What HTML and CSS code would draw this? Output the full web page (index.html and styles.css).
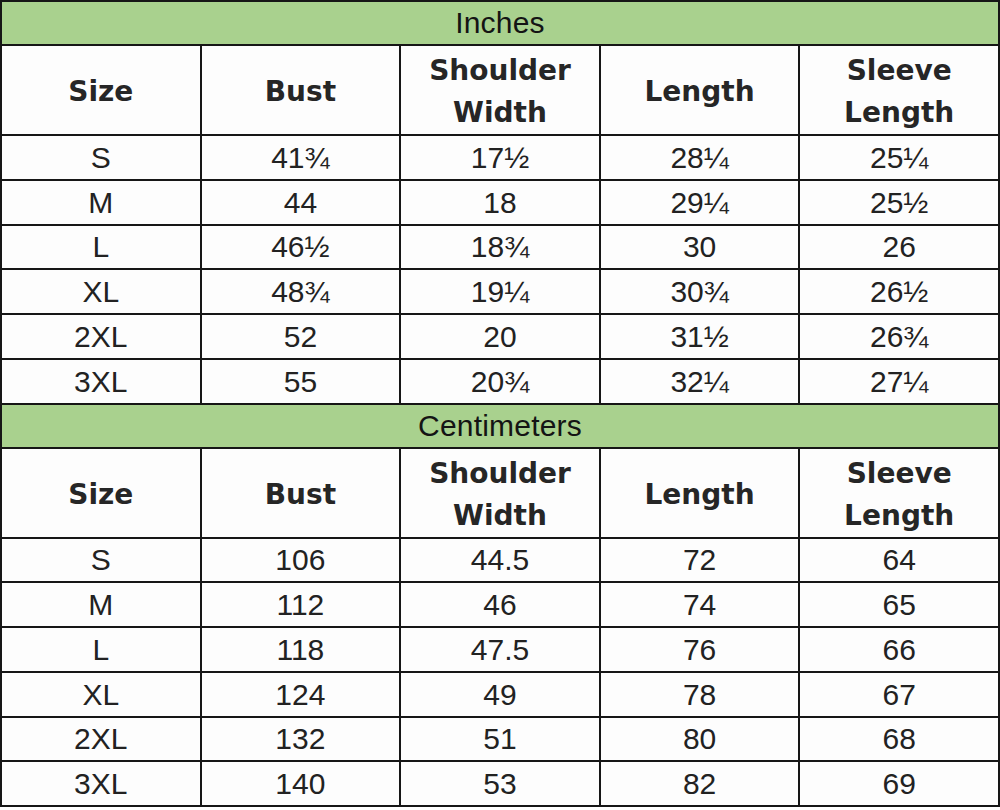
FILE: index.html
```html
<!DOCTYPE html>
<html>
<head>
<meta charset="utf-8">
<link rel="stylesheet" href="styles.css">
</head>
<body>
<table class="chart">
  <colgroup><col><col><col><col><col></colgroup>
  <tbody>
    <tr class="unit"><td colspan="5">Inches</td></tr>
    <tr class="head"><th>Size</th><th>Bust</th><th>Shoulder<br>Width</th><th>Length</th><th>Sleeve<br>Length</th></tr>
    <tr><td>S</td><td>41¾</td><td>17½</td><td>28¼</td><td>25¼</td></tr>
    <tr><td>M</td><td>44</td><td>18</td><td>29¼</td><td>25½</td></tr>
    <tr><td>L</td><td>46½</td><td>18¾</td><td>30</td><td>26</td></tr>
    <tr><td>XL</td><td>48¾</td><td>19¼</td><td>30¾</td><td>26½</td></tr>
    <tr><td>2XL</td><td>52</td><td>20</td><td>31½</td><td>26¾</td></tr>
    <tr><td>3XL</td><td>55</td><td>20¾</td><td>32¼</td><td>27¼</td></tr>
    <tr class="unit"><td colspan="5">Centimeters</td></tr>
    <tr class="head"><th>Size</th><th>Bust</th><th>Shoulder<br>Width</th><th>Length</th><th>Sleeve<br>Length</th></tr>
    <tr><td>S</td><td>106</td><td>44.5</td><td>72</td><td>64</td></tr>
    <tr><td>M</td><td>112</td><td>46</td><td>74</td><td>65</td></tr>
    <tr><td>L</td><td>118</td><td>47.5</td><td>76</td><td>66</td></tr>
    <tr><td>XL</td><td>124</td><td>49</td><td>78</td><td>67</td></tr>
    <tr><td>2XL</td><td>132</td><td>51</td><td>80</td><td>68</td></tr>
    <tr><td>3XL</td><td>140</td><td>53</td><td>82</td><td>69</td></tr>
  </tbody>
</table>
</body>
</html>
```
FILE: styles.css
```css
html, body {
  margin: 0;
  padding: 0;
  background: #ffffff;
}
.chart {
  width: 1000px;
  border-collapse: collapse;
  table-layout: fixed;
  font-family: "Liberation Sans", Arial, sans-serif;
  color: #222222;
  margin: 0;
}
.chart col {
  width: 20%;
}
.chart td, .chart th {
  border: 2px solid #161616;
  text-align: center;
  vertical-align: middle;
  padding: 1px 0 0 0;
  font-size: 30px;
  line-height: 34px;
  font-weight: normal;
  background: #fdfdfd;
}
.chart tr {
  height: 44.75px;
}
.chart tr.unit {
  height: 44px;
}
.chart tr.unit td {
  background: #a9d18e;
  font-size: 30px;
  color: #141414;
  letter-spacing: 0.2px;
  padding: 0;
}
.chart tr.head {
  height: 90px;
}
.chart tr.head th {
  font-family: "DejaVu Sans", sans-serif;
  font-weight: bold;
  font-size: 28px;
  line-height: 42px;
  color: #262626;
  padding-top: 4px;
}
```
